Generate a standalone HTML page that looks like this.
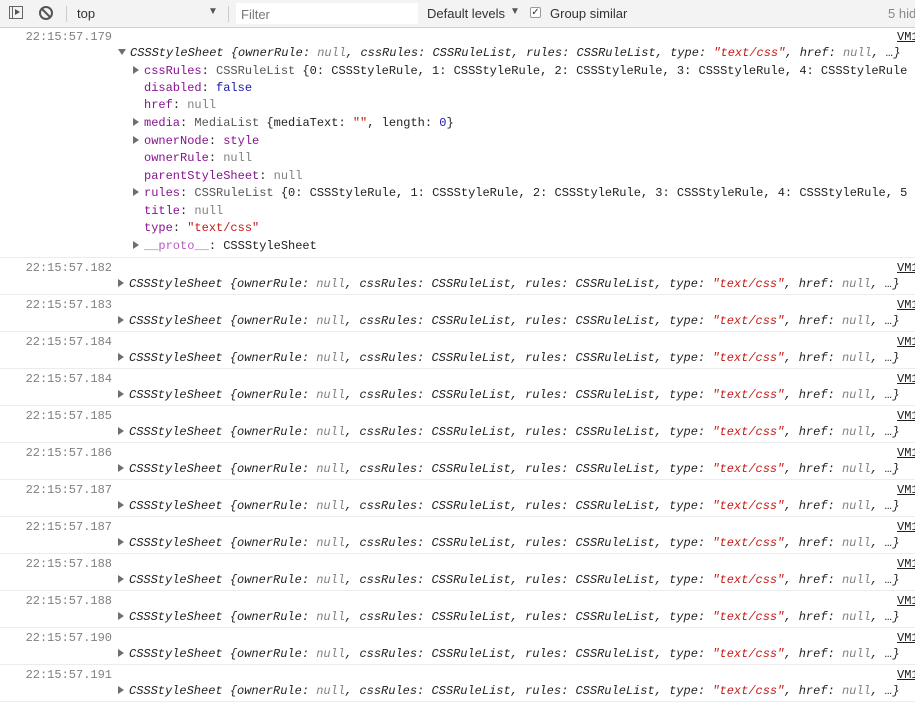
<!DOCTYPE html>
<html><head><meta charset="utf-8"><style>
body{margin:0;width:915px;height:704px;overflow:hidden;background:#fff;position:relative;font-family:"Liberation Mono",monospace;font-size:12px;color:#222}
.tb{position:absolute;left:0;top:0;width:915px;height:27px;background:#f3f3f3;border-bottom:1px solid #d0d0d0;font-family:"Liberation Sans",sans-serif;font-size:13px;color:#333}
.tb div{position:absolute;white-space:nowrap}
.l{position:absolute;white-space:pre;height:16px;line-height:16px}
.ts{color:#808080;right:803px;text-align:right}
.sep{position:absolute;left:0;width:915px;height:1px;background:#ececec}
.vm{position:absolute;left:897px;text-decoration:underline;color:#222;white-space:pre;height:16px;line-height:16px}
i{font-style:italic}
.k{color:#881391}.n{color:#808080}.s{color:#c41a16}.b{color:#1a1aa6}.c{color:#555}
.tri{display:inline-block;width:0;height:0;border-top:4px solid transparent;border-bottom:4px solid transparent;border-left:6px solid #6e6e6e;margin-right:5px;vertical-align:-0px}
.trd{display:inline-block;width:0;height:0;border-left:4px solid transparent;border-right:4px solid transparent;border-top:6px solid #6e6e6e;margin-right:4px;vertical-align:1px}
</style></head><body>
<div class="tb">
 <div style="left:9px;top:6px;width:14px;height:13px;border:1px solid #666;box-sizing:border-box"></div>
 <div style="left:12px;top:6px;width:1px;height:13px;background:#666"></div>
 <div style="left:15px;top:9px;width:0;height:0;border-top:3.5px solid transparent;border-bottom:3.5px solid transparent;border-left:5px solid #555"></div>
 <div style="left:39px;top:6px;width:14px;height:14px;border:2px solid #555;border-radius:50%;box-sizing:border-box"></div>
 <div style="left:40px;top:12px;width:12px;height:2px;background:#555;transform:rotate(45deg)"></div>
 <div style="left:66px;top:6px;width:1px;height:16px;background:#ccc"></div>
 <div style="left:77px;top:6px">top</div>
 <div style="left:208px;top:6px;font-size:10px;color:#555">▼</div>
 <div style="left:228px;top:6px;width:1px;height:16px;background:#ccc"></div>
 <div style="left:236px;top:3px;width:182px;height:21px;background:#fff"></div>
 <div style="left:241px;top:7px;color:#777">Filter</div>
 <div style="left:427px;top:6px">Default levels</div>
 <div style="left:510px;top:6px;font-size:10px;color:#555">▼</div>
 <div style="left:530px;top:7px;width:11px;height:11px;border:1px solid #999;background:#fff;border-radius:2px;box-sizing:border-box;font-size:10px;line-height:9px;text-align:center;color:#333">✓</div>
 <div style="left:550px;top:6px">Group similar</div>
 <div style="left:888px;top:6px;color:#888">5 hid</div>
</div>

<div class="l ts" style="top:29px">22:15:57.179</div>
<div class="vm" style="top:29px">VM1</div>
<div class="l" style="left:118px;top:45px"><span class="trd"></span><i>CSSStyleSheet {ownerRule: <span class="n">null</span>, cssRules: CSSRuleList, rules: CSSRuleList, type: <span class="s">"text/css"</span>, href: <span class="n">null</span>, …}</i></div>
<div class="l" style="left:133px;top:63px"><span class="tri"></span><span class="k">cssRules</span>: <span class="c">CSSRuleList</span> {0: CSSStyleRule, 1: CSSStyleRule, 2: CSSStyleRule, 3: CSSStyleRule, 4: CSSStyleRule</div>
<div class="l" style="left:144px;top:80px"><span class="k">disabled</span>: <span class="b">false</span></div>
<div class="l" style="left:144px;top:97px"><span class="k">href</span>: <span class="n">null</span></div>
<div class="l" style="left:133px;top:115px"><span class="tri"></span><span class="k">media</span>: <span class="c">MediaList</span> {mediaText: <span class="s">""</span>, length: <span class="b">0</span>}</div>
<div class="l" style="left:133px;top:133px"><span class="tri"></span><span class="k">ownerNode</span>: <span class="k">style</span></div>
<div class="l" style="left:144px;top:150px"><span class="k">ownerRule</span>: <span class="n">null</span></div>
<div class="l" style="left:144px;top:168px"><span class="k">parentStyleSheet</span>: <span class="n">null</span></div>
<div class="l" style="left:133px;top:185px"><span class="tri"></span><span class="k">rules</span>: <span class="c">CSSRuleList</span> {0: CSSStyleRule, 1: CSSStyleRule, 2: CSSStyleRule, 3: CSSStyleRule, 4: CSSStyleRule, 5</div>
<div class="l" style="left:144px;top:203px"><span class="k">title</span>: <span class="n">null</span></div>
<div class="l" style="left:144px;top:220px"><span class="k">type</span>: <span class="s">"text/css"</span></div>
<div class="l" style="left:133px;top:238px"><span class="tri"></span><span class="k" style="color:#b65cc0">__proto__</span>: CSSStyleSheet</div>

<div id="rows"></div>
<script>
var ts=["182","183","184","184","185","186","187","187","188","188","190","191"];
var h="";
for(var k=0;k<13;k++){var t=257+37*k;h+='<div class="sep" style="top:'+t+'px"></div>';
if(k<12){h+='<div class="l ts" style="top:'+(t+3)+'px">22:15:57.'+ts[k]+'</div><div class="vm" style="top:'+(t+3)+'px">VM1</div><div class="l" style="left:118px;top:'+(t+19)+'px"><span class="tri"></span><i>CSSStyleSheet {ownerRule: <span class="n">null</span>, cssRules: CSSRuleList, rules: CSSRuleList, type: <span class="s">"text/css"</span>, href: <span class="n">null</span>, …}</i></div>';}}
document.getElementById("rows").innerHTML=h;
</script>
</body></html>
